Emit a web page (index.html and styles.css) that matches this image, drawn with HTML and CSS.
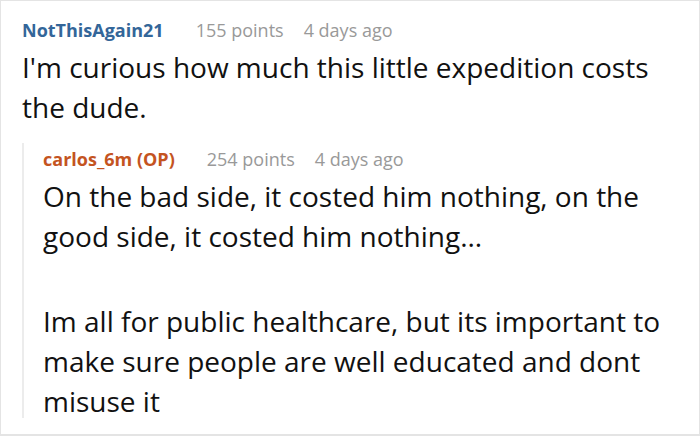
FILE: index.html
```html
<!DOCTYPE html>
<html lang="en">
<head>
  <meta charset="UTF-8">
  <title>Comments</title>
  <link rel="stylesheet" href="styles.css">
</head>
<body>
  <div class="thread">
    <div class="comment">
      <div class="meta">
        <span class="author">NotThisAgain21</span>
        <span class="points">155 points</span>
        <span class="time">4 days ago</span>
      </div>
      <div class="body">
        <p>I'm curious how much this little expedition costs the dude.</p>
      </div>

      <div class="reply">
        <div class="meta">
          <span class="author op">carlos_6m (OP)</span>
          <span class="points">254 points</span>
          <span class="time">4 days ago</span>
        </div>
        <div class="body">
          <p>On the bad side, it costed him nothing, on the good side, it costed him nothing...</p>
          <p>Im all for public healthcare, but its important to make sure people are well educated and dont misuse it</p>
        </div>
      </div>
    </div>
  </div>
</body>
</html>
```
FILE: styles.css
```css
body {
  margin: 0;
  font-family: "Open Sans", "Noto Sans", sans-serif;
  background: #fff;
}
.thread {
  width: 700px;
  height: 436px;
  box-sizing: border-box;
  border: 1px solid #e4e4e4;
  border-bottom-width: 2px;
  padding: 17px 5px 0 21px;
  overflow: hidden;
}
.meta {
  display: flex;
  align-items: baseline;
  font-size: 18px;
  line-height: 24px;
  margin-bottom: 5px;
  color: #999;
}
.author {
  font-weight: bold;
  color: #336699;
  margin-right: 32px;
}
.author.op {
  color: #c4541f;
}
.points {
  margin-right: 20px;
}
.body {
  font-size: 28px;
  line-height: 40px;
  color: #111;
}
.body p {
  margin: 0 0 45px;
}
.body p:last-child {
  margin-bottom: 0;
}
.reply {
  margin-top: 16px;
  border-left: 2px solid #ececec;
  padding: 4px 0 0 19px;
  height: 275px;
  box-sizing: border-box;
}
```
